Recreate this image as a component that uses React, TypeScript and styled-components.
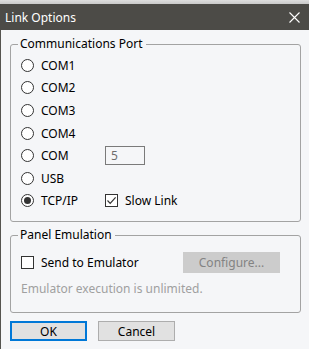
import React from 'react';
import styled, { createGlobalStyle } from 'styled-components';

const GlobalStyle = createGlobalStyle`
  html, body {
    margin: 0;
    padding: 0;
    background: #f5f6f8;
  }
  body {
    font-family: "Noto Sans", "DejaVu Sans", sans-serif;
    font-size: 12px;
    color: #000;
  }
`;

const Window = styled.div`
  width: 309px;
  height: 349px;
  display: flex;
  flex-direction: column;
  background: linear-gradient(#dedede, #c9c9c9) top / 100% 4px no-repeat, #f5f6f8;
  padding-top: 4px;
  box-sizing: border-box;
  overflow: hidden;
`;

const TitleBar = styled.div`
  height: 26px;
  background: #4c4b47;
  color: #fff;
  display: flex;
  align-items: center;
  justify-content: space-between;
  padding: 0 9px 0 5px;
  font-size: 12px;
  flex-shrink: 0;
`;

const CloseIcon = styled.svg`
  width: 11px;
  height: 11px;
`;

const Body = styled.div`
  flex: 1;
  border-left: 1px solid #55544f;
  padding: 0 8px 0 9px;
  display: flex;
  flex-direction: column;
`;

const Group = styled.section<{ $h: number; $top: number }>`
  margin-top: ${p => p.$top}px;
  padding: 0 0 0 10px;
  height: ${p => p.$h}px;
  box-sizing: border-box;
  border: 1px solid #a3a3a3;
  border-radius: 3px;
  flex-shrink: 0;
`;

const Caption = styled.div`
  width: fit-content;
  margin: -9px 0 0 -3px;
  padding: 0 3px 0 2px;
  height: 16px;
  line-height: 16px;
  background: #f5f6f8;
`;

const OptionGrid = styled.div`
  display: grid;
  grid-template-columns: 84px auto;
  grid-auto-rows: 22.6px;
  align-items: center;
  padding-top: 2px;
`;

const Option = styled.label`
  display: flex;
  align-items: center;
  gap: 7px;
`;

const Radio = styled.span<{ $on?: boolean }>`
  width: 13px;
  height: 13px;
  box-sizing: border-box;
  border: 1px solid #333;
  border-radius: 50%;
  background: #fff;
  display: flex;
  align-items: center;
  justify-content: center;
  &::after {
    content: '';
    width: 7px;
    height: 7px;
    border-radius: 50%;
    background: ${p => (p.$on ? '#333' : 'transparent')};
  }
`;

const Box = styled.span`
  width: 13px;
  height: 13px;
  box-sizing: border-box;
  border: 1px solid #333;
  background: #fff;
  display: flex;
  align-items: center;
  justify-content: center;
`;

const NumberField = styled.div`
  width: 40px;
  height: 19px;
  box-sizing: border-box;
  border: 1px solid #7a7a7a;
  background: #f5f6f8;
  color: #6d6d6d;
  padding-left: 5px;
  line-height: 17px;
`;

const EmuRow = styled.div`
  display: flex;
  align-items: center;
  justify-content: space-between;
  margin-top: 9px;
  padding-right: 20px;
`;

const DisabledButton = styled.div`
  width: 97px;
  height: 21px;
  background: #cccccc;
  color: #838383;
  display: flex;
  align-items: center;
  justify-content: center;
`;

const Note = styled.div`
  color: #a0a0a0;
  margin-top: 8px;
  line-height: 16px;
`;

const Footer = styled.div`
  display: flex;
  gap: 11px;
  margin-top: 8px;
`;

const Button = styled.div<{ $default?: boolean }>`
  width: 77px;
  height: 20px;
  box-sizing: border-box;
  background: #e1e1e1;
  border: ${p => (p.$default ? '2px solid #0078d7' : '1px solid #adadad')};
  display: flex;
  align-items: center;
  justify-content: center;
`;

const ports = ['COM1', 'COM2', 'COM3', 'COM4'];

const Check = () => (
  <svg width="11" height="11" viewBox="0 0 11 11">
    <path d="M1.5 5.5 L4.2 8.3 L9.6 2.4" fill="none" stroke="#333" strokeWidth="1.2" />
  </svg>
);

export default function App() {
  return (
    <>
      <GlobalStyle />
      <Window>
        <TitleBar>
          <span>Link Options</span>
          <CloseIcon viewBox="0 0 11 11">
            <path d="M0.5 0.5 L10.5 10.5 M10.5 0.5 L0.5 10.5" stroke="#fff" strokeWidth="1.1" />
          </CloseIcon>
        </TitleBar>
        <Body>
          <Group $top={14} $h={178}>
            <Caption>Communications Port</Caption>
            <OptionGrid>
              {ports.map(p => (
                <React.Fragment key={p}>
                  <Option>
                    <Radio />
                    {p}
                  </Option>
                  <span />
                </React.Fragment>
              ))}
              <Option>
                <Radio />
                COM
              </Option>
              <NumberField>5</NumberField>
              <Option>
                <Radio />
                USB
              </Option>
              <span />
              <Option>
                <Radio $on />
                TCP/IP
              </Option>
              <Option>
                <Box>
                  <Check />
                </Box>
                Slow Link
              </Option>
            </OptionGrid>
          </Group>
          <Group $top={13} $h={78}>
            <Caption>Panel Emulation</Caption>
            <EmuRow>
              <Option>
                <Box />
                Send to Emulator
              </Option>
              <DisabledButton>Configure...</DisabledButton>
            </EmuRow>
            <Note>Emulator execution is unlimited.</Note>
          </Group>
          <Footer>
            <Button $default>OK</Button>
            <Button>Cancel</Button>
          </Footer>
        </Body>
      </Window>
    </>
  );
}
